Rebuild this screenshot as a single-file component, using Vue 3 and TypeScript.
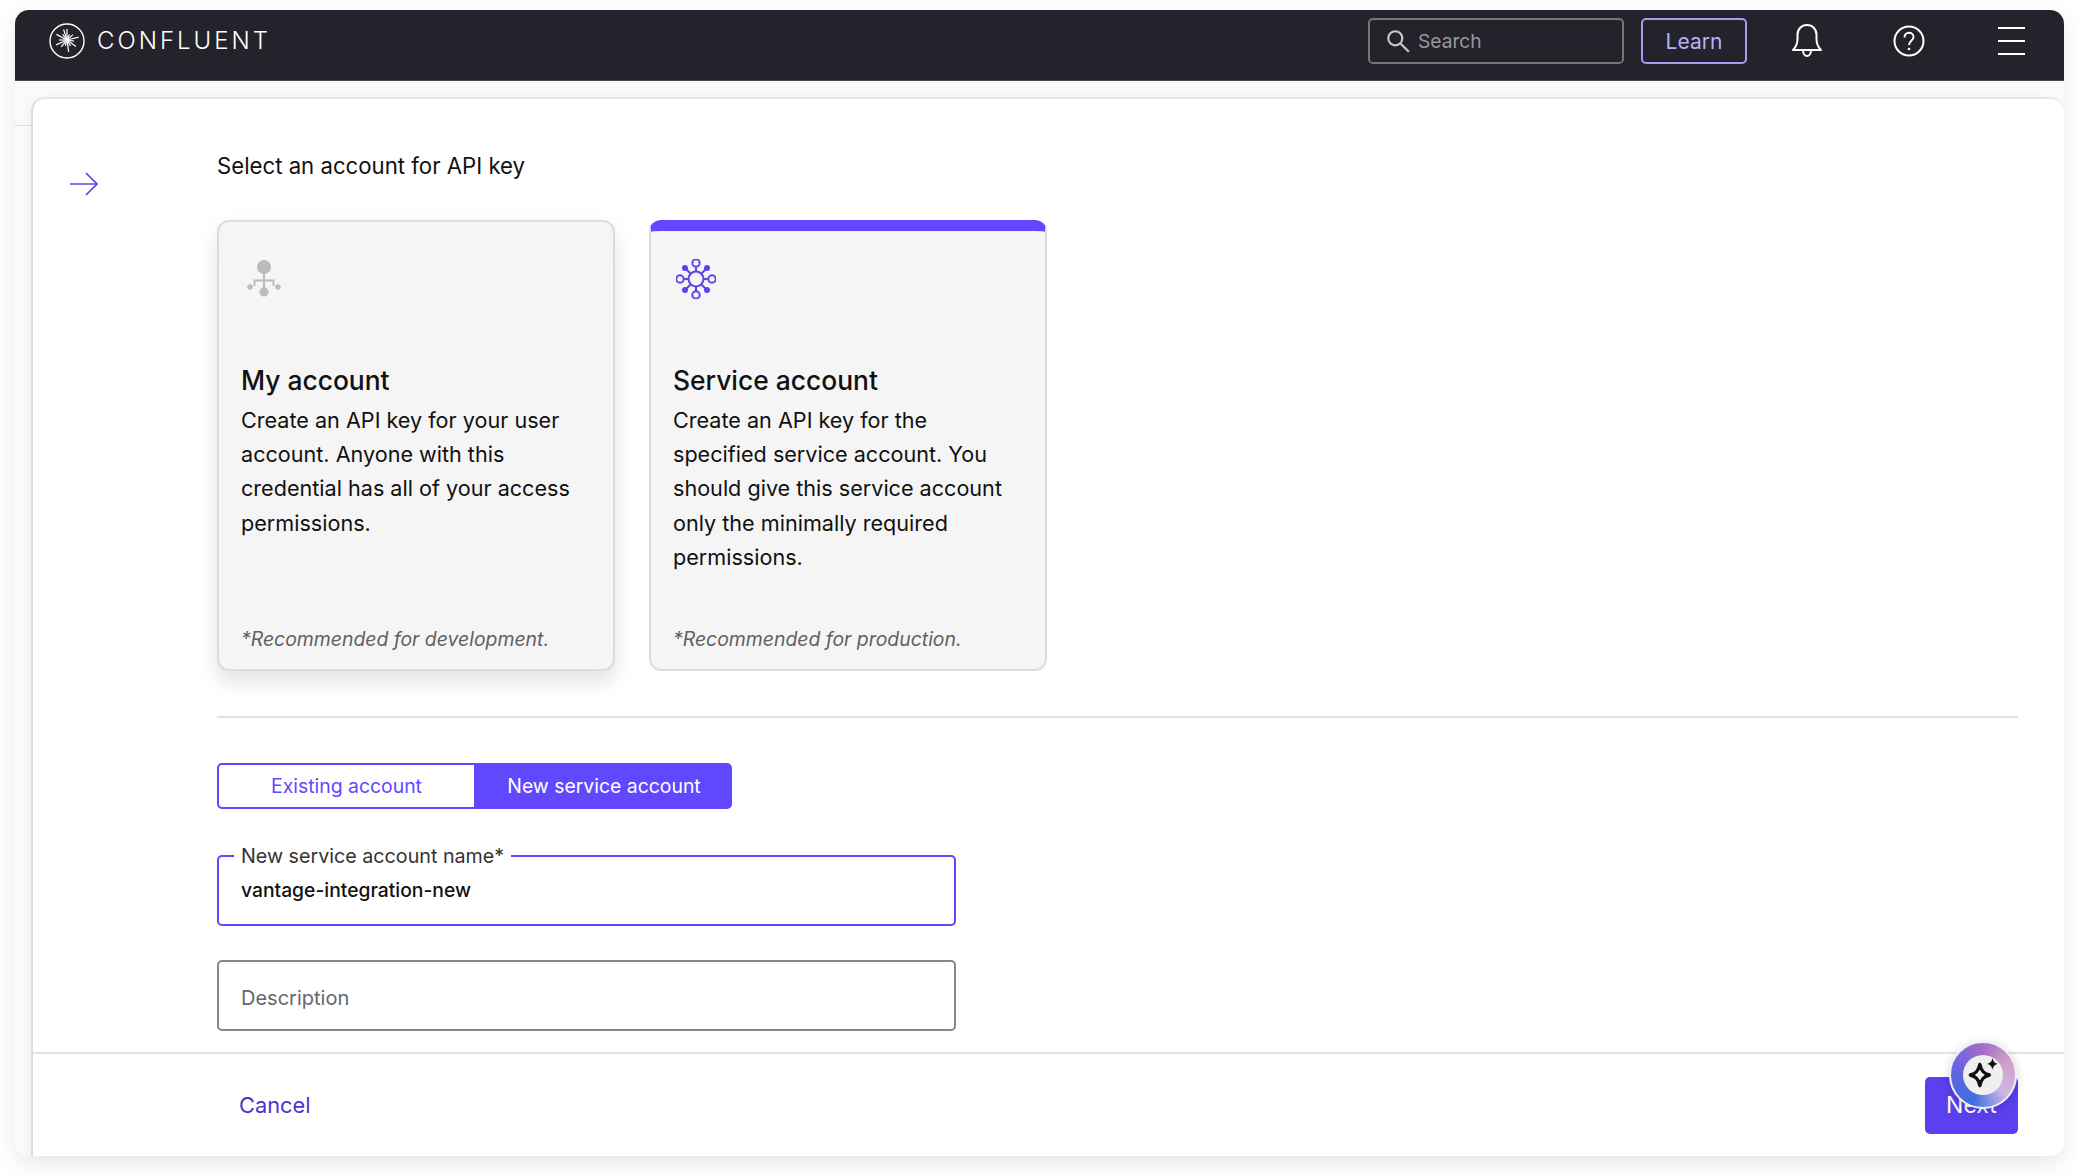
<script setup lang="ts">
interface AccountCard {
  title: string
  lines: string[]
  note: string
  selected: boolean
}

const cards: AccountCard[] = [
  {
    title: 'My account',
    lines: ['Create an API key for your user', 'account. Anyone with this', 'credential has all of your access', 'permissions.'],
    note: '*Recommended for development.',
    selected: false,
  },
  {
    title: 'Service account',
    lines: ['Create an API key for the', 'specified service account. You', 'should give this service account', 'only the minimally required', 'permissions.'],
    note: '*Recommended for production.',
    selected: true,
  },
]

const rays = [
  { a: 0, l: 11 }, { a: 24, l: 6 }, { a: 48, l: 8 }, { a: 76, l: 12 }, { a: 100, l: 7 },
  { a: 126, l: 11 }, { a: 150, l: 7 }, { a: 172, l: 12 }, { a: 196, l: 6 }, { a: 220, l: 9 },
  { a: 246, l: 12 }, { a: 270, l: 8 }, { a: 298, l: 12 }, { a: 322, l: 7 }, { a: 342, l: 11 },
]
const ports = [
  { x: 20, y: 4 },
  { x: 36, y: 20 },
  { x: 20, y: 36 },
  { x: 4, y: 20 },
]
const dots = [
  { x: 9, y: 9 },
  { x: 31, y: 9 },
  { x: 31, y: 31 },
  { x: 9, y: 31 },
]
</script>

<template>
  <div class="window">
    <header class="nav">
      <div class="brand">
        <svg class="logo" viewBox="0 0 36 36" width="36" height="36">
          <circle cx="18" cy="18" r="17" fill="none" stroke="#fff" stroke-width="1.4" />
          <g stroke="#fff" stroke-width="1.200">
            <line
              v-for="r in rays"
              :key="r.a"
              x1="18"
              y1="17"
              x2="18"
              :y2="17 - r.l"
              :transform="`rotate(${r.a} 18 17)`"
            />
          </g>
        </svg>
        <span class="wordmark">CONFLUENT</span>
      </div>
      <div class="nav-right">
        <div class="search">
          <svg width="26" height="26" viewBox="0 0 24 24" fill="none" stroke="#c8c8cc" stroke-width="2">
            <circle cx="9.5" cy="9.5" r="6.5" />
            <line x1="14.5" y1="14.5" x2="22" y2="22" />
          </svg>
          <span>Search</span>
        </div>
        <div class="learn">Learn</div>
        <svg class="nav-icon bell" width="34" height="36" viewBox="0 0 34 36" fill="none" stroke="#fff" stroke-width="2">
          <path d="M3 27h28c-3-3-4.500-6-4.500-11V12C26.500 6 22.500 2 17 2S7.500 6 7.500 12v4C7.500 21 6 24 3 27z" stroke-linejoin="round" />
          <path d="M13 27c0 4 2 6 4 6s4-2 4-6" />
        </svg>
        <svg class="nav-icon help" width="32" height="32" viewBox="0 0 32 32" fill="none" stroke="#fff" stroke-width="2">
          <circle cx="16" cy="16" r="14.500" />
          <path d="M11.500 12.500c0-3 2-4.800 4.500-4.800s4.500 1.800 4.500 4.300c0 3.800-4.500 3.800-4.500 8" />
          <circle cx="16" cy="24" r="1.300" fill="#fff" stroke="none" />
        </svg>
        <div class="burger"><i /><i /><i /></div>
      </div>
    </header>

    <div class="stage">
      <div class="gutter"><div class="gutter-head" /></div>
      <section class="sheet">
        <div class="sheet-body">
          <div class="arrow-col">
            <svg width="30" height="24" viewBox="0 0 30 24" fill="none" stroke="#5b45e8" stroke-width="1.700">
              <path d="M1 12h27M17 1l11 11-11 11" />
            </svg>
          </div>
          <div class="form">
            <h2 class="heading">Select an account for API key</h2>
            <div class="cards">
              <article v-for="c in cards" :key="c.title" class="card" :class="{ selected: c.selected }">
                <svg v-if="!c.selected" class="card-icon" width="40" height="40" viewBox="0 0 40 40" fill="#bcbcbc" stroke="none">
                  <circle cx="20" cy="8" r="7" />
                  <path d="M19 14h2v6.500h9.500V27h-2v-4.500H21V30h-2v-7.500h-7.500V27h-2v-6.500H19z" />
                  <circle cx="6" cy="28" r="2.800" />
                  <circle cx="34" cy="28" r="2.800" />
                  <circle cx="20" cy="33" r="4.500" />
                </svg>
                <svg v-else class="card-icon" width="40" height="40" viewBox="0 0 40 40" fill="none" stroke="#5b45e8" stroke-width="2">
                  <circle cx="20" cy="20" r="7.500" />
                  <circle v-for="p in ports" :key="`p${p.x}${p.y}`" :cx="p.x" :cy="p.y" r="3.700" />
                  <circle v-for="d in dots" :key="`d${d.x}${d.y}`" :cx="d.x" :cy="d.y" r="3" fill="#5b45e8" stroke="none" />
                  <path d="M20 7.500v5M20 27.500v5M7.500 20h5M27.500 20h5M10.500 10.500l4 4M29.500 10.500l-4 4M10.500 29.500l4-4M29.500 29.500l-4-4" />
                </svg>
                <h3 class="card-title">{{ c.title }}</h3>
                <p class="card-text">
                  <span v-for="l in c.lines" :key="l">{{ l }}</span>
                </p>
                <p class="card-note">{{ c.note }}</p>
              </article>
            </div>
            <hr class="rule" />
            <div class="toggle">
              <div class="seg">Existing account</div>
              <div class="seg on">New service account</div>
            </div>
            <div class="field focused">
              <label class="notch">New service account name*</label>
              <span class="value">vantage-integration-new</span>
            </div>
            <div class="field">
              <span class="placeholder">Description</span>
            </div>
          </div>
        </div>
        <footer class="foot">
          <span class="cancel">Cancel</span>
          <div class="next">Next</div>
        </footer>
      </section>
    </div>

    <div class="assist">
      <div class="assist-inner">
        <svg width="38" height="38" viewBox="0 0 36 36" fill="none">
          <path d="M15 8c1.400 6 3.500 8.500 9 10-5.500 1.500-7.600 4-9 10-1.400-6-3.500-8.500-9-10 5.500-1.500 7.600-4 9-10z" stroke="#111" stroke-width="3.200" stroke-linejoin="round" />
          <path d="M27 2c.8 3.400 1.900 4.600 5 5.500-3.100.9-4.200 2.100-5 5.500-.8-3.400-1.900-4.600-5-5.500 3.100-.9 4.200-2.100 5-5.500z" fill="#111" />
        </svg>
      </div>
    </div>
  </div>
</template>

<style>
html, body { margin: 0; background: #fff; }
body { min-height: 100vh; }
</style>

<style scoped>
* { box-sizing: border-box; }
.window {
  position: relative;
  margin: 10px 14px 0 15px;
  height: 1146px;
  border-radius: 14px;
  background: #fafafa;
  box-shadow: 0 8px 24px rgba(0, 0, 0, 0.09);
  font-family: Inter, "Liberation Sans", sans-serif;
  color: #111;
  display: flex;
  flex-direction: column;
  overflow: visible;
}
.nav {
  flex: none;
  height: 71px;
  background: #24232b;
  border-bottom: 1px solid #4b4a55;
  border-radius: 14px 14px 0 0;
  display: flex;
  align-items: center;
  justify-content: space-between;
  padding: 0 39px 8px 34px;
}
.brand { display: flex; align-items: center; gap: 12px; }
.logo { display: block; }
.wordmark {
  color: #fff;
  font-size: 24px;
  line-height: 32px;
  padding-bottom: 1px;
  font-weight: 300;
  letter-spacing: 3px;
}
.nav-right { display: flex; align-items: center; }
.search {
  width: 256px;
  height: 46px;
  border: 2px solid #77767d;
  border-radius: 5px;
  display: flex;
  align-items: center;
  gap: 7px;
  padding-left: 15px;
  color: #99989e;
  font-size: 19.200px;
}
.learn {
  width: 106px;
  height: 46px;
  margin-left: 17px;
  border: 2px solid #a79cf0;
  border-radius: 5px;
  color: #b9aff7;
  font-size: 21px;
  display: flex;
  align-items: center;
  justify-content: center;
}
.nav-icon { display: block; flex: none; }
.bell { margin-left: 43px; }
.help { margin-left: 69px; }
.burger {
  margin-left: 73px;
  width: 27px;
  height: 28px;
  display: flex;
  flex-direction: column;
  justify-content: space-between;
}
.burger i { display: block; height: 2px; background: #fff; }

.stage { flex: 1; display: flex; min-height: 0; }
.gutter { flex: none; width: 16px; }
.gutter-head { height: 45px; border-bottom: 1px solid #dedede; }
.sheet {
  flex: 1;
  margin-top: 16px;
  border-top: 2px solid #e8e8e8;
  border-left: 2px solid #dcdcdc;
  border-radius: 14px 14px 14px 0;
  background: #fff;
  box-shadow: -4px 0 10px rgba(0, 0, 0, 0.03);
  display: flex;
  flex-direction: column;
  min-width: 0;
}
.sheet-body { flex: 1; display: flex; min-height: 0; }
.arrow-col { flex: none; width: 184px; padding: 73px 0 0 36px; }
.form { flex: 1; padding-right: 46px; min-width: 0; }
.heading {
  margin: 51px 0 0;
  font-size: 22.200px;
  line-height: 32px;
  font-weight: 400;
}
.cards { display: flex; gap: 34px; margin-top: 38px; height: 451px; }
.card {
  position: relative;
  width: 398px;
  background: #f5f5f5;
  border: 2px solid #dcdcdc;
  border-radius: 12px;
  padding: 37px 22px 0;
}
.card:not(.selected) {
  box-shadow: 0 10px 22px rgba(0, 0, 0, 0.12);
}
.card.selected { border-top: 11px solid #6148ff; padding-top: 28px; }
.card-icon { display: block; margin-left: 3px; }
.card-title {
  margin: 62px 0 0;
  font-size: 26.400px;
  line-height: 38px;
  font-weight: 500;
}
.card-text { margin: 4px 0 0; font-size: 21.600px; line-height: 34.200px; }
.card-text span { display: block; white-space: nowrap; }
.card-note {
  position: absolute;
  left: 22px;
  bottom: 15px;
  margin: 0;
  font-size: 19.400px;
  line-height: 30px;
  font-style: italic;
  color: #5f5f64;
}
.rule { margin: 45px 0 0; border: 0; border-top: 2px solid #e2e2e2; }
.toggle { display: flex; margin-top: 45px; width: 515px; height: 46px; }
.seg {
  flex: 1;
  border: 2px solid #6148ff;
  border-radius: 5px 0 0 5px;
  color: #6148ff;
  font-size: 19.400px;
  display: flex;
  align-items: center;
  justify-content: center;
}
.seg.on {
  flex: none;
  width: 256px;
  background: #6148ff;
  color: #fff;
  border-radius: 0 5px 5px 0;
}
.field {
  position: relative;
  width: 739px;
  height: 71px;
  margin-top: 34px;
  border: 2px solid #86858c;
  border-radius: 5px;
  padding: 0 22px;
  display: flex;
  align-items: center;
  font-size: 20px;
}
.field.focused { margin-top: 46px; border-color: #6148ff; height: 71px; padding-bottom: 2px; }
.notch {
  position: absolute;
  left: 15px;
  top: -14px;
  background: #fff;
  padding: 0 7px;
  font-size: 19.700px;
  line-height: 26px;
  color: #333;
}
.value { color: #111; font-weight: 500; font-size: 19.300px; }
.placeholder { color: #66666b; padding-top: 4px; }

.foot {
  flex: none;
  height: 104px;
  border-top: 2px solid #e2e2e2;
  display: flex;
  align-items: center;
  justify-content: space-between;
  padding: 0 46px 0 206px;
}
.cancel { font-size: 21.800px; color: #4a34cf; }
.next {
  width: 93px;
  height: 57px;
  background: #5a40ef;
  border-radius: 5px;
  color: #fff;
  font-size: 23px;
  display: flex;
  align-items: center;
  justify-content: center;
}
.assist {
  position: absolute;
  right: 47px;
  bottom: 47px;
  width: 68px;
  height: 68px;
  border-radius: 50%;
  padding: 12px;
  border: 2px solid #f1eef5;
  background: conic-gradient(from 200deg, #3f6fe0, #6a63e0 90deg, #a46cc8 160deg, #cf9fc4 220deg, #cdb7ea 290deg, #3f6fe0 360deg);
  box-shadow: 0 2px 10px rgba(0, 0, 0, 0.18);
}
.assist-inner {
  width: 100%;
  height: 100%;
  border-radius: 50%;
  background: #efefef;
  display: flex;
  align-items: center;
  justify-content: center;
}
</style>
